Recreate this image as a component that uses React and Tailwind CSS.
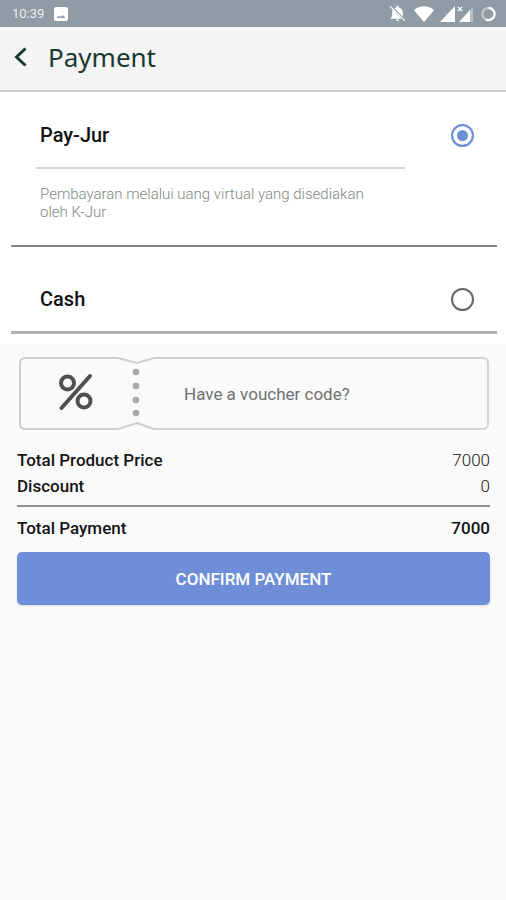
import { useState } from "react";

const StatusBar = () => (
  <div className="flex h-[27px] items-center justify-between bg-[#8f9ba5] pr-2.5 pl-3 text-white">
    <div className="flex items-center gap-2.5">
      <span className="text-[13px] leading-4 text-[#eef0f2]">10:39</span>
      <svg width="14" height="14" viewBox="0 0 14 14" aria-hidden="true">
        <rect width="14" height="14" rx="2" fill="currentColor" />
        <path d="M2.5 11l2.300-2.200 1.600 1.200 2.200-2 3 3z" fill="#8f9ba5" />
      </svg>
    </div>
    <div className="flex items-center" aria-hidden="true">
      <svg className="mr-2" width="17" height="17" viewBox="0 0 24 24" fill="currentColor">
        <path d="M12 22.500c1.300 0 2.200-.9 2.200-2.200H9.800c0 1.300 1 2.200 2.200 2.200zM19.500 15V10.500c0-3.300-2-6-5.500-6.800V3a2 2 0 0 0-4 0v.7c-.9.200-1.700.5-2.400 1L19.500 16.500zM5.300 6.500C4.700 7.700 4.500 9 4.500 10.500V16L2 18.500v1h15.800z" />
        <path d="M1.500 2l21 20.500" stroke="currentColor" strokeWidth="1.600" />
      </svg>
      <svg className="mr-1.5" width="20" height="16" viewBox="0 0 20 16" fill="currentColor">
        <path d="M10 16L0 4.200C2.600 1.700 6.200.3 10 .3s7.400 1.400 10 3.900z" />
      </svg>
      <svg className="mr-2" width="33" height="16" viewBox="0 0 33 16" fill="currentColor">
        <path d="M15 0v16H0z" />
        <path d="M33 1v15h-4V5z" opacity="0.35" />
        <path d="M30 4v12H19z" />
        <path d="M18 1l4 4M22 1l-4 4" stroke="currentColor" strokeWidth="1.200" />
      </svg>
      <svg width="15" height="16" viewBox="0 0 16 16" fill="none" strokeWidth="2.400">
        <circle cx="8" cy="8" r="6.500" stroke="currentColor" opacity="0.45" />
        <path d="M8 1.500a6.500 6.500 0 1 1-3 12.300" stroke="currentColor" />
      </svg>
    </div>
  </div>
);

const Header = () => (
  <header className="flex h-[65px] items-center border-b-2 border-[#cbcccc] bg-[#f4f4f4] pb-1 pl-3 text-[#17392f]">
    <button type="button" aria-label="Back" className="flex h-8 w-9 items-center">
      <svg width="18" height="22" viewBox="0 0 18 22" fill="none" stroke="currentColor" strokeWidth="3">
        <path d="M13.500 2.500L4.500 11l9 8.500" />
      </svg>
    </button>
    <h1 className="font-['Noto_Sans',sans-serif] text-[26px] leading-8">Payment</h1>
  </header>
);

const PaymentOption = ({ id, label, checked, onChange }) => (
  <div className="flex items-center justify-between pr-[23px] pl-[29px]">
    <label htmlFor={id} className="text-[20px] leading-6 font-medium text-[#111111]">
      {label}
    </label>
    <input
      id={id}
      type="radio"
      name="payment"
      checked={checked}
      onChange={() => onChange(id)}
      className="size-[23px] appearance-none rounded-full border-2 border-[#666666] bg-white checked:border-[#6c8fd8] checked:bg-[#6c8fd8] checked:shadow-[inset_0_0_0_4px_white]"
    />
  </div>
);

const Voucher = () => (
  <button type="button" className="flex h-[73px] w-full items-stretch text-left">
    <svg width="140" height="73" viewBox="0 0 140 73" fill="none" aria-hidden="true" className="shrink-0">
      <path
        d="M140 1H135L118 6L99 1H7Q1 1 1 6V67Q1 72 7 72H99L118 66L135 72H140"
        stroke="#cecece"
        strokeWidth="2"
      />
      <g fill="#a8a8a8">
        <circle cx="117" cy="15" r="3.300" />
        <circle cx="117" cy="29" r="3.300" />
        <circle cx="117" cy="43" r="3.300" />
        <circle cx="117" cy="56" r="3.300" />
      </g>
      <g stroke="#505050" strokeWidth="4">
        <circle cx="48.500" cy="26" r="6.500" />
        <circle cx="65" cy="44" r="6.500" />
        <path d="M42.500 51L71 19" strokeLinecap="round" />
      </g>
    </svg>
    <span className="flex flex-1 items-center rounded-r-md border-y-2 border-r-2 border-[#d2d2d2] pl-[25px] text-[17px] leading-5 text-[#707070]">
      Have a voucher code?
    </span>
  </button>
);

const App = () => {
  const [method, setMethod] = useState("pay-jur");

  return (
    <div className="min-h-screen bg-[#fafafa] font-[Roboto,sans-serif]">
      <StatusBar />
      <Header />

      <main>
        <div className="bg-white pr-[9px] pb-2.5 pl-[11px]">
          <section className="border-b-2 border-[#858585] pt-[31px] pb-6">
            <PaymentOption id="pay-jur" label="Pay-Jur" checked={method === "pay-jur"} onChange={setMethod} />
            <p className="mt-5 mr-[92px] ml-[25px] border-t-2 border-[#d4d4d4] pt-4 pr-6 pl-1 text-[15px] leading-[18px] font-light text-[#7e8784]">
              Pembayaran melalui uang virtual yang disediakan oleh K-Jur
            </p>
          </section>
          <section className="border-b-3 border-[#b0b0b0] pt-10 pb-5">
            <PaymentOption id="cash" label="Cash" checked={method === "cash"} onChange={setMethod} />
          </section>
        </div>

        <div className="pt-3 pr-4 pl-[17px]">
          <div className="pr-px pl-0.5 pt-px">
            <Voucher />
          </div>

          <dl className="mt-[17px] text-[17px] leading-[26px] text-[#151515]">
            <div className="flex justify-between">
              <dt className="font-medium">Total Product Price</dt>
              <dd className="font-light">7000</dd>
            </div>
            <div className="flex justify-between">
              <dt className="font-medium">Discount</dt>
              <dd className="font-light">0</dd>
            </div>
            <div className="mt-1.5 flex justify-between border-t-2 border-[#929292] pt-2 font-medium">
              <dt>Total Payment</dt>
              <dd>7000</dd>
            </div>
          </dl>

          <button
            type="button"
            className="mt-[11px] h-[53px] w-full rounded-[5px] bg-[#6e8fd7] text-[17px] leading-5 font-medium text-white shadow-sm"
          >
            CONFIRM PAYMENT
          </button>
        </div>
      </main>
    </div>
  );
};

export default App;
